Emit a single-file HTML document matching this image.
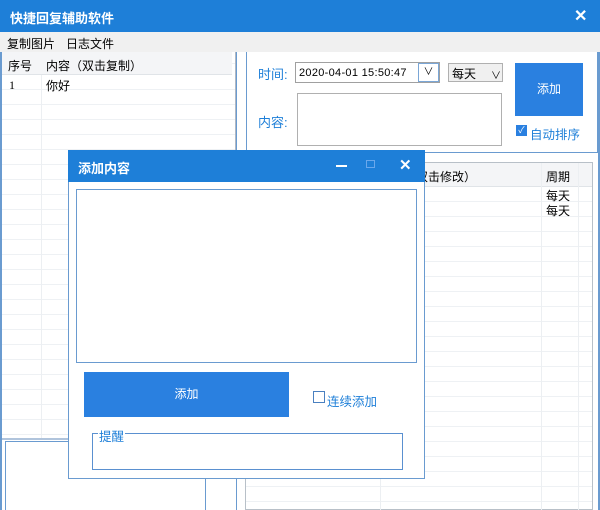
<!DOCTYPE html>
<html><head><meta charset="utf-8"><style>
*{margin:0;padding:0;box-sizing:border-box}
body{width:600px;height:510px;overflow:hidden;background:#fff;font-family:"Liberation Sans","Noto Sans CJK SC",sans-serif;font-size:12px;color:#000;position:relative}
.a{position:absolute}
.rows{background-image:repeating-linear-gradient(to bottom,transparent 0,transparent 14px,#eef1f4 14px,#eef1f4 15px)}
.blue{color:#1e7fd8}
</style></head><body>
<div class="a" style="left:0;top:0;width:600px;height:32px;background:#1e7fd8"></div>
<div class="a" style="left:10px;top:8px;color:#fff;font-size:13px;font-weight:bold">快捷回复辅助软件</div>
<div class="a" style="left:574px;top:6px;color:#fff;font-size:16px;font-weight:bold">✕</div>
<div class="a" style="left:0;top:32px;width:600px;height:20px;background:#f0f0f0"></div>
<div class="a" style="left:7px;top:35px">复制图片</div>
<div class="a" style="left:66px;top:35px">日志文件</div>
<div class="a" style="left:0;top:52px;width:600px;height:458px;background:#fff;border-left:2px solid #6a9bd0;border-right:2px solid #6a9bd0"></div>
<!-- left grid -->
<div class="a rows" style="left:2px;top:52px;width:234px;height:386px;border-right:1px solid #b0b8c4;background-position:0 23px"></div>
<div class="a" style="left:2px;top:52px;width:230px;height:23px;background:#f4f5f7;border-bottom:1px solid #e0e4e8"></div>
<div class="a" style="left:41px;top:75px;width:1px;height:363px;background:#eceff2"></div>
<div class="a" style="left:8px;top:57px">序号</div>
<div class="a" style="left:46px;top:57px">内容（双击复制）</div>
<div class="a" style="left:9px;top:78px;font-family:'Liberation Serif',serif">1</div>
<div class="a" style="left:46px;top:77px">你好</div>
<div class="a" style="left:2px;top:438px;width:234px;height:2px;background:#b0c4dc"></div>
<div class="a" style="left:5px;top:441px;width:201px;height:69px;border:1px solid #6a9bd0;border-bottom:none"></div>
<div class="a" style="left:236px;top:52px;width:1px;height:458px;background:#6a9bd0"></div>
<!-- right group -->
<div class="a" style="left:246px;top:52px;width:352px;height:101px;border:1px solid #6a9bd0;border-top:none"></div>
<div class="a blue" style="left:258px;top:64px;font-size:13px">时间:</div>
<div class="a" style="left:295px;top:62px;width:145px;height:21px;border:1px solid #a0a0a0;background:#fff;padding:4px 0 0 3px;font-size:11px;letter-spacing:0.3px">2020-04-01 15:50:47</div>
<div class="a" style="left:418px;top:63px;width:21px;height:19px;border:1px solid #7aa6d6;background:#fff;text-align:center;font-size:10px;line-height:18px">∨</div>
<div class="a" style="left:448px;top:63px;width:55px;height:19px;border:1px solid #b0b0b0;background:#f0f0f0;padding:1px 0 0 3px">每天<span style="position:absolute;left:42px;top:3px;font-size:10px">∨</span></div>
<div class="a blue" style="left:258px;top:112px;font-size:13px">内容:</div>
<div class="a" style="left:297px;top:93px;width:205px;height:53px;border:1px solid #b0b0b0"></div>
<div class="a" style="left:515px;top:63px;width:68px;height:53px;background:#2a80e0;color:#fff;text-align:center;line-height:53px">添加</div>
<div class="a" style="left:516px;top:125px;width:11px;height:11px;background:#2a80e0;color:#fff;font-size:9px;line-height:11px;text-align:center">✓</div>
<div class="a blue" style="left:530px;top:124px;font-size:12.5px">自动排序</div>
<!-- right grid -->
<div class="a rows" style="left:245px;top:162px;width:348px;height:348px;border:1px solid #b8c0c8;background-position:0 24px"></div>
<div class="a" style="left:246px;top:163px;width:346px;height:24px;background:#f4f5f7;border-bottom:1px solid #e0e4e8"></div>
<div class="a" style="left:380px;top:163px;width:1px;height:347px;background:#eceff2"></div>
<div class="a" style="left:541px;top:163px;width:1px;height:347px;background:#eceff2"></div>
<div class="a" style="left:578px;top:163px;width:1px;height:347px;background:#eceff2"></div>
<div class="a" style="left:380px;top:168px">内容（双击修改）</div>
<div class="a" style="left:546px;top:168px">周期</div>
<div class="a" style="left:546px;top:187px">每天</div>
<div class="a" style="left:546px;top:202px">每天</div>
<!-- dialog -->
<div class="a" style="left:68px;top:150px;width:357px;height:329px;background:#fff;border:1px solid #6a9bd0"></div>
<div class="a" style="left:68px;top:150px;width:357px;height:32px;background:#1e7fd8"></div>
<div class="a" style="left:78px;top:158px;color:#fff;font-size:13px;font-weight:bold">添加内容</div>
<div class="a" style="left:336px;top:165px;width:11px;height:2px;background:#fff"></div>
<div class="a" style="left:366px;top:160px;width:9px;height:8px;border:1px solid #6aa8ec"></div>
<div class="a" style="left:399px;top:156px;color:#fff;font-size:15px;font-weight:bold">✕</div>
<div class="a" style="left:76px;top:189px;width:341px;height:174px;border:1px solid #6a9bd0"></div>
<div class="a" style="left:84px;top:372px;width:205px;height:45px;background:#2a80e0;color:#fff;text-align:center;line-height:45px">添加</div>
<div class="a" style="left:313px;top:391px;width:12px;height:12px;border:1px solid #4a80c0"></div>
<div class="a blue" style="left:327px;top:391px;font-size:12.5px">连续添加</div>
<div class="a" style="left:92px;top:433px;width:311px;height:37px;border:1px solid #5a90d0"></div>
<div class="a blue" style="left:98px;top:426px;background:#fff;padding:0 1px;font-size:12.5px">提醒</div>
</body></html>
